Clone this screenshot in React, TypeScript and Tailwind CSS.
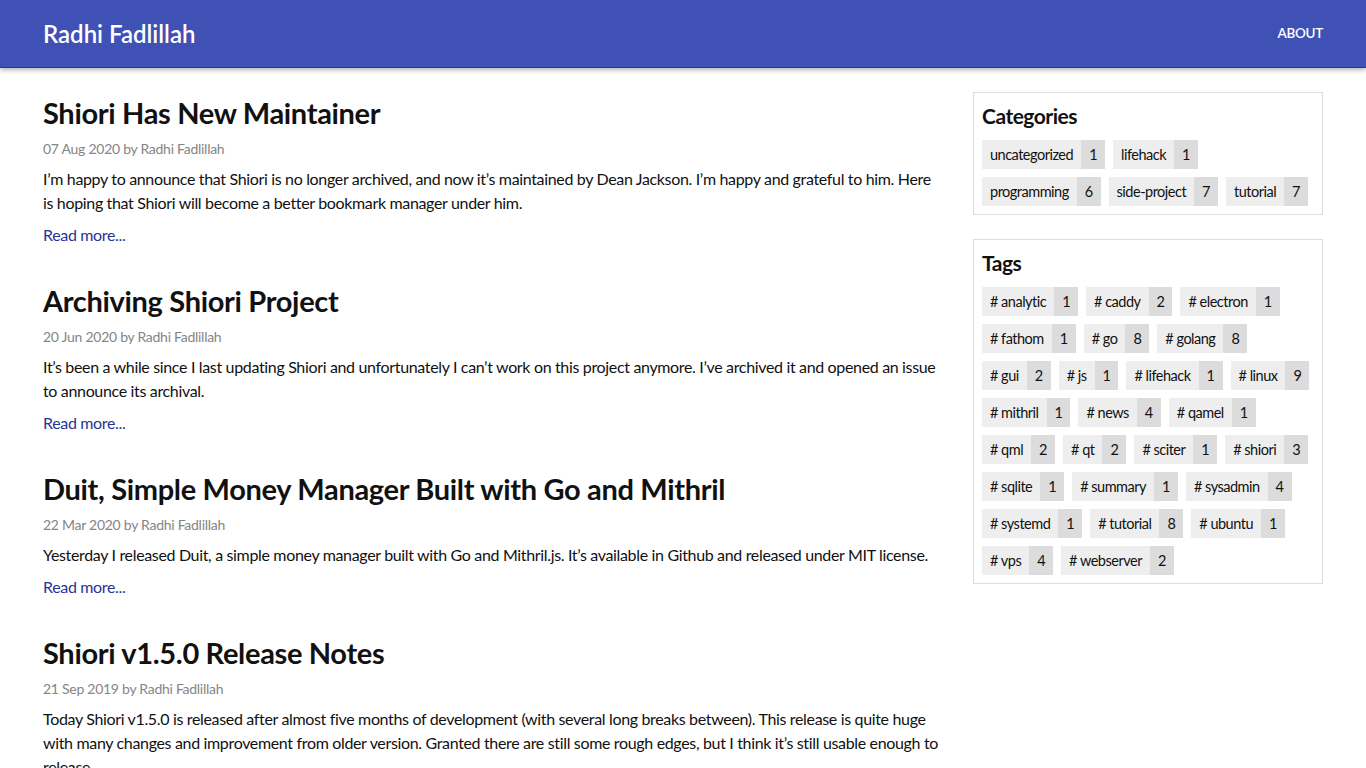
import React from "react";

const posts = [
  {
    title: "Shiori Has New Maintainer",
    meta: "07 Aug 2020 by Radhi Fadlillah",
    excerpt:
      "I’m happy to announce that Shiori is no longer archived, and now it’s maintained by Dean Jackson. I’m happy and grateful to him. Here is hoping that Shiori will become a better bookmark manager under him.",
  },
  {
    title: "Archiving Shiori Project",
    meta: "20 Jun 2020 by Radhi Fadlillah",
    excerpt:
      "It’s been a while since I last updating Shiori and unfortunately I can’t work on this project anymore. I’ve archived it and opened an issue to announce its archival.",
  },
  {
    title: "Duit, Simple Money Manager Built with Go and Mithril",
    meta: "22 Mar 2020 by Radhi Fadlillah",
    excerpt:
      "Yesterday I released Duit, a simple money manager built with Go and Mithril.js. It’s available in Github and released under MIT license.",
  },
  {
    title: "Shiori v1.5.0 Release Notes",
    meta: "21 Sep 2019 by Radhi Fadlillah",
    excerpt:
      "Today Shiori v1.5.0 is released after almost five months of development (with several long breaks between). This release is quite huge with many changes and improvement from older version. Granted there are still some rough edges, but I think it’s still usable enough to release.",
  },
];

const categories: [string, number][] = [
  ["uncategorized", 1],
  ["lifehack", 1],
  ["programming", 6],
  ["side-project", 7],
  ["tutorial", 7],
];

const tags: [string, number][] = [
  ["analytic", 1],
  ["caddy", 2],
  ["electron", 1],
  ["fathom", 1],
  ["go", 8],
  ["golang", 8],
  ["gui", 2],
  ["js", 1],
  ["lifehack", 1],
  ["linux", 9],
  ["mithril", 1],
  ["news", 4],
  ["qamel", 1],
  ["qml", 2],
  ["qt", 2],
  ["sciter", 1],
  ["shiori", 3],
  ["sqlite", 1],
  ["summary", 1],
  ["sysadmin", 4],
  ["systemd", 1],
  ["tutorial", 8],
  ["ubuntu", 1],
  ["vps", 4],
  ["webserver", 2],
];

function Chip({ label, count }: { label: string; count: number }) {
  return (
    <a className="flex h-[29px] items-stretch text-[14.5px] leading-[29px] tracking-[-0.5px] text-[#111]">
      <span className="bg-[#eeeeee] px-2">{label}</span>
      <span className="bg-[#dcdcdc] px-2">{count}</span>
    </a>
  );
}

export default function App() {
  return (
    <div
      className="min-h-screen bg-white text-[#111]"
      style={{ fontFamily: "Lato, 'Noto Sans', sans-serif" }}
    >
      <header className="relative z-10 h-[68px] border-b border-[#283593] bg-[#3f51b5] shadow-[0_2px_5px_rgba(0,0,0,0.3)]">
        <div className="flex h-full items-center justify-between px-[43px]">
          <span className="text-[24px] font-semibold text-white">Radhi Fadlillah</span>
          <span className="text-[13.5px] font-semibold tracking-[-0.3px] text-white">ABOUT</span>
        </div>
      </header>
      <main className="flex gap-[30px] px-[43px] pt-[24px]">
        <div className="flex min-w-0 flex-1 flex-col gap-[33px]">
          {posts.map((p) => (
            <article key={p.title} className="flex flex-col">
              <h2 className="text-[29px] font-bold leading-[42px] tracking-[-0.33px]">{p.title}</h2>
              <div className="mt-[5px] text-[14px] leading-[20px] tracking-[-0.27px] text-[#858585]">{p.meta}</div>
              <p className="mt-[8px] text-[16px] leading-[24px] tracking-[-0.34px] text-[#111]">{p.excerpt}</p>
              <a className="mt-[8px] text-[16px] leading-[24px] tracking-[-0.34px] text-[#283593]">Read more...</a>
            </article>
          ))}
        </div>
        <aside className="flex w-[350px] shrink-0 flex-col gap-[24px]">
          <section className="border border-[#dddddd] px-2 pb-2 pt-[8px]">
            <h3 className="mb-[9px] text-[21px] font-bold leading-[30px] tracking-[-0.5px]">Categories</h3>
            <div className="flex flex-wrap gap-2">
              {categories.map(([n, c]) => (
                <Chip key={n} label={n} count={c} />
              ))}
            </div>
          </section>
          <section className="border border-[#dddddd] px-2 pb-2 pt-[8px]">
            <h3 className="mb-[9px] text-[21px] font-bold leading-[30px] tracking-[-0.5px]">Tags</h3>
            <div className="flex flex-wrap gap-2">
              {tags.map(([n, c]) => (
                <Chip key={n} label={`# ${n}`} count={c} />
              ))}
            </div>
          </section>
        </aside>
      </main>
    </div>
  );
}
